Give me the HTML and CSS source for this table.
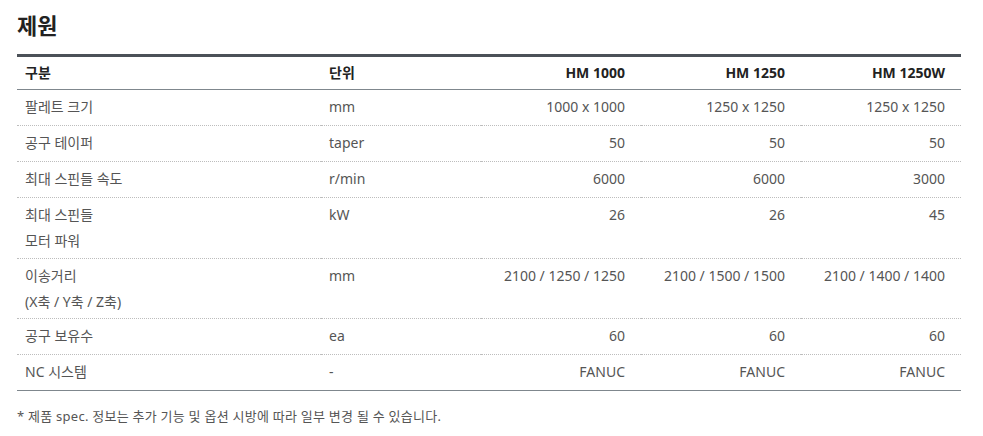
FILE: index.html
```html
<!DOCTYPE html>
<html lang="ko">
<head>
<meta charset="utf-8">
<link rel="stylesheet" href="styles.css">
</head>
<body>
<div class="spec">
  <h2 class="title">제원</h2>
  <table class="spec-table">
    <colgroup>
      <col class="c1"><col class="c2"><col class="c3"><col class="c3"><col class="c3">
    </colgroup>
    <thead>
      <tr><th>구분</th><th>단위</th><th class="num">HM 1000</th><th class="num">HM 1250</th><th class="num">HM 1250W</th></tr>
    </thead>
    <tbody>
      <tr><td>팔레트 크기</td><td>mm</td><td class="num">1000 x 1000</td><td class="num">1250 x 1250</td><td class="num">1250 x 1250</td></tr>
      <tr><td>공구 테이퍼</td><td>taper</td><td class="num">50</td><td class="num">50</td><td class="num">50</td></tr>
      <tr><td>최대 스핀들 속도</td><td>r/min</td><td class="num">6000</td><td class="num">6000</td><td class="num">3000</td></tr>
      <tr class="multi"><td><span class="ln">최대 스핀들</span><span class="ln">모터 파워</span></td><td>kW</td><td class="num">26</td><td class="num">26</td><td class="num">45</td></tr>
      <tr class="multi tight"><td><span class="ln">이송거리</span><span class="ln">(X축 / Y축 / Z축)</span></td><td>mm</td><td class="num">2100 / 1250 / 1250</td><td class="num">2100 / 1500 / 1500</td><td class="num">2100 / 1400 / 1400</td></tr>
      <tr><td>공구 보유수</td><td>ea</td><td class="num">60</td><td class="num">60</td><td class="num">60</td></tr>
      <tr><td>NC 시스템</td><td>-</td><td class="num">FANUC</td><td class="num">FANUC</td><td class="num">FANUC</td></tr>
    </tbody>
  </table>
  <p class="note">* 제품 spec. 정보는 추가 기능 및 옵션 시방에 따라 일부 변경 될 수 있습니다.</p>
</div>
</body>
</html>
```
FILE: styles.css
```css
html, body { margin: 0; padding: 0; background: #fff; }
body { font-family: "Noto Sans", "Noto Sans CJK KR", sans-serif; color: #555; }
.spec { width: 944px; padding: 0 0 0 17px; }
.title {
  margin: 0;
  padding-top: 8px;
  height: 46px;
  font-size: 22px;
  line-height: 32px;
  font-weight: 700;
  color: #222;
  font-family: "Noto Sans CJK KR", sans-serif;
}
.spec-table {
  width: 944px;
  border-collapse: collapse;
  table-layout: fixed;
  border-top: 3px solid #4b5158;
  border-bottom: 1px solid #7f878d;
  font-size: 14px;
}
.c1 { width: 304px; }
.c2 { width: 160px; }
.c3 { width: 160px; }
.spec-table th {
  height: 32px;
  padding: 0 16px 0 8px;
  text-align: left;
  font-weight: 700;
  color: #222;
  border-bottom: 1px solid #7f878d;
  line-height: 20px;
}
.spec-table td {
  height: 26px;
  padding: 4px 16px 5px 8px;
  line-height: 26px;
  vertical-align: top;
  border-bottom: 1px dotted #bdbdbd;
  color: #555;
}
.spec-table .multi td { padding-bottom: 4px; }
.spec-table .tight td { padding-bottom: 3px; }
.ln { display: block; height: 26px; line-height: 26px; overflow: hidden; }
.spec-table tbody tr:last-child td { border-bottom: none; }
.spec-table .num { text-align: right; }
.note {
  margin: 15px 0 0;
  font-size: 13px;
  line-height: 20px;
  letter-spacing: 0.25px;
  color: #555;
}
```
